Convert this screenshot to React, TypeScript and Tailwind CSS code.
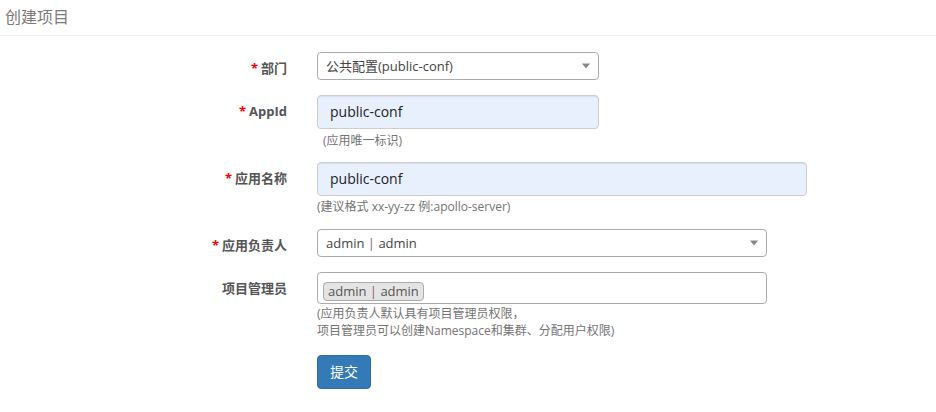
import React from "react";

const FONT = { fontFamily: '"Open Sans", "Noto Sans CJK SC", sans-serif' };

function Caret() {
  return (
    <span className="absolute right-[8px] top-1/2 -translate-y-1/2 w-0 h-0 border-l-[4px] border-r-[4px] border-t-[5px] border-l-transparent border-r-transparent border-t-[#888]" />
  );
}

function Label({ text, required }: { text: string; required?: boolean }) {
  return (
    <div className="w-[287px] shrink-0 text-right pt-[7px] text-[13px] leading-[18px] font-bold text-[#555]">
      {required && <span className="text-[#f00] mr-[3px]">*</span>}
      {text}
    </div>
  );
}

function Help({ children, className = "" }: { children: React.ReactNode; className?: string }) {
  return <div className={"text-[12px] leading-[17px] text-[#737373] " + className}>{children}</div>;
}

export default function App() {
  return (
    <div className="w-[936px] h-[412px] bg-white overflow-hidden" style={FONT}>
      <div className="h-[36px] border-b border-[#efeff4] pl-[5px] pt-[7px] text-[16px] leading-[20px] text-[#7a7a7a]">
        创建项目
      </div>
      <div className="pt-[16px] flex flex-col">
        {/* 部门 */}
        <div className="flex">
          <Label text="部门" required />
          <div className="ml-[30px]">
            <div className="relative w-[282px] h-[28px] border border-[#aaa] rounded-[4px] pl-[8px] text-[13px] leading-[26px] text-[#444]">
              公共配置(public-conf)
              <Caret />
            </div>
          </div>
        </div>

        {/* AppId */}
        <div className="flex mt-[15px]">
          <Label text="AppId" required />
          <div className="ml-[30px]">
            <div className="w-[282px] h-[34px] border border-[#ccc] rounded-[4px] bg-[#e8f0fe] pl-[12px] text-[14px] leading-[32px] text-[#222] shadow-[inset_0_1px_1px_rgba(0,0,0,0.075)]">
              public-conf
            </div>
            <Help className="mt-[3px] ml-[6px]">(应用唯一标识)</Help>
          </div>
        </div>

        {/* 应用名称 */}
        <div className="flex mt-[13px]">
          <Label text="应用名称" required />
          <div className="ml-[30px]">
            <div className="w-[490px] h-[34px] border border-[#ccc] rounded-[4px] bg-[#e8f0fe] pl-[12px] text-[14px] leading-[32px] text-[#222] shadow-[inset_0_1px_1px_rgba(0,0,0,0.075)]">
              public-conf
            </div>
            <Help className="mt-[2px]">(建议格式 xx-yy-zz 例:apollo-server)</Help>
          </div>
        </div>

        {/* 应用负责人 */}
        <div className="flex mt-[14px]">
          <Label text="应用负责人" required />
          <div className="ml-[30px]">
            <div className="relative w-[450px] h-[28px] border border-[#aaa] rounded-[4px] pl-[8px] text-[13px] leading-[26px] text-[#444]">
              admin <span className="text-[#8a5a6e]">|</span> admin
              <Caret />
            </div>
          </div>
        </div>

        {/* 项目管理员 */}
        <div className="flex mt-[15px]">
          <Label text="项目管理员" />
          <div className="ml-[30px]">
            <div className="w-[450px] h-[32px] border border-[#aaa] rounded-[4px] pl-[5px] pt-[5px]">
              <span className="inline-block h-[19px] border border-[#aaa] rounded-[4px] bg-[#e4e4e4] px-[4px] text-[13px] leading-[17px] text-[#555]">
                admin <span className="text-[#8a5a6e]">|</span> admin
              </span>
            </div>
            <Help className="mt-[1px]">
              (应用负责人默认具有项目管理员权限，
              <br />
              项目管理员可以创建Namespace和集群、分配用户权限)
            </Help>
          </div>
        </div>

        {/* 提交 */}
        <div className="flex mt-[16px]">
          <div className="w-[287px] shrink-0" />
          <div className="ml-[30px]">
            <button className="w-[54px] h-[34px] rounded-[4px] bg-[#337ab7] border border-[#2e6da4] text-white text-[14px] leading-[20px]">
              提交
            </button>
          </div>
        </div>
      </div>
    </div>
  );
}
